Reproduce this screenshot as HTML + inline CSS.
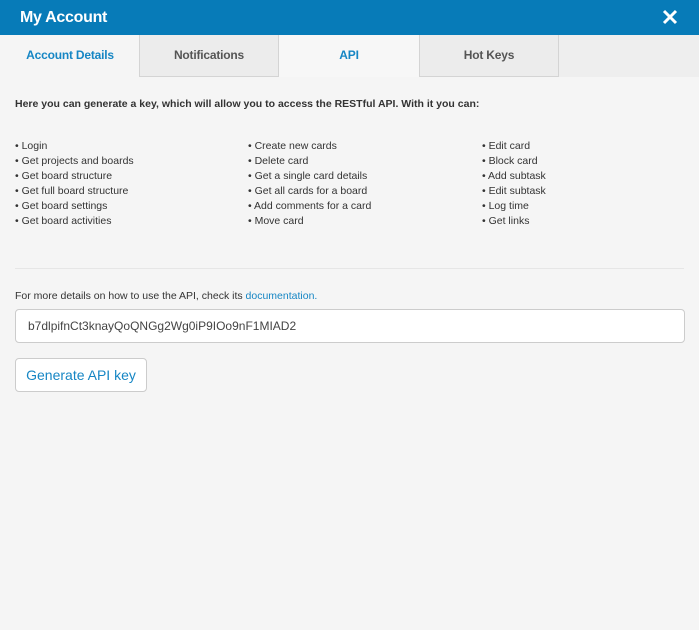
<!DOCTYPE html>
<html><head><style>
*{margin:0;padding:0;box-sizing:border-box}
body{width:699px;height:630px;background:#f5f5f5;font-family:"Liberation Sans",sans-serif;color:#333;position:relative;overflow:hidden}
.hdr{position:absolute;left:0;top:0;width:699px;height:35px;background:#077bb8;color:#fff}
.hdr .t{position:absolute;left:20px;top:9px;font-size:16px;font-weight:bold;letter-spacing:-0.3px}
.hdr svg{position:absolute;right:21px;top:9px}
.tabs{position:absolute;top:35px;left:0;width:699px;height:42px;background:#eeeeee}
.tab{position:absolute;top:0;height:42px;width:140px;text-align:center;font-size:12px;font-weight:bold;line-height:40px;letter-spacing:-0.2px}
.g{background:#ececec;border:1px solid #d4d4d4;border-top:none;color:#555}
.a{background:#f7f7f7;color:#1686c4}
.txt{position:absolute;font-size:10.5px}
.col{position:absolute;top:139px;font-size:10.5px;line-height:15px;color:#333}
.hr{position:absolute;left:15px;top:268px;width:669px;height:1px;background:#e6e6e6}
.inp{position:absolute;left:15px;top:309px;width:670px;height:34px;background:#fff;border:1px solid #ccc;border-radius:4px;font-size:12px;line-height:32px;padding-left:12px;color:#444}
.btn{position:absolute;left:15px;top:358px;width:132px;height:34px;background:#fff;border:1px solid #ccc;border-radius:4px;font-size:14px;line-height:32px;text-align:center;color:#1686c4}
</style></head><body>
<div class="hdr"><div class="t">My Account</div>
<svg width="16" height="16" viewBox="0 0 16 16"><path d="M2 2L14 14M14 2L2 14" stroke="#fff" stroke-width="3"/></svg></div>
<div class="tabs">
<div class="tab a" style="left:0;background:#f5f5f5">Account Details</div>
<div class="tab g" style="left:139px">Notifications</div>
<div class="tab a" style="left:279px">API</div>
<div class="tab g" style="left:419px">Hot Keys</div>
</div>
<div class="txt" style="left:15px;top:98px;font-weight:bold;color:#333">Here you can generate a key, which will allow you to access the RESTful API. With it you can:</div>
<div class="col" style="left:15px">• Login<br>• Get projects and boards<br>• Get board structure<br>• Get full board structure<br>• Get board settings<br>• Get board activities</div>
<div class="col" style="left:248px">• Create new cards<br>• Delete card<br>• Get a single card details<br>• Get all cards for a board<br>• Add comments for a card<br>• Move card</div>
<div class="col" style="left:482px">• Edit card<br>• Block card<br>• Add subtask<br>• Edit subtask<br>• Log time<br>• Get links</div>
<div class="hr"></div>
<div class="txt" style="left:15px;top:290px">For more details on how to use the API, check its <span style="color:#1686c4">documentation.</span></div>
<div class="inp">b7dlpifnCt3knayQoQNGg2Wg0iP9IOo9nF1MIAD2</div>
<div class="btn">Generate API key</div>
</body></html>
